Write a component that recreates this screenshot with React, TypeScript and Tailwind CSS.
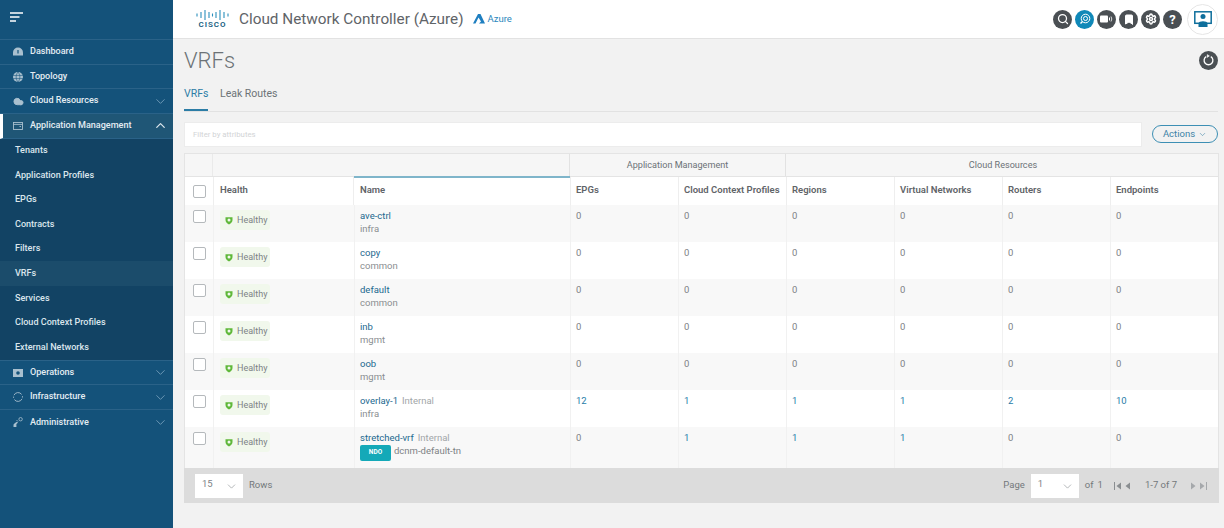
import React from "react";
import { ChevronDown, ChevronUp, Search, Settings, Cloud, Bookmark } from "lucide-react";

const cols = "grid grid-cols-[28px_141px_216px_108px_108px_108px_108px_108px_110px]";

function NavRow({ icon, label, chevron, active, noBorder }: { icon: React.ReactNode; label: string; chevron?: "up" | "down"; active?: boolean; noBorder?: boolean }) {
  return (
    <div className={`h-[24.7px] flex items-center relative ${noBorder ? "" : "border-b border-[#2a6288]"} ${active ? "bg-[#1f5676] border-l-[3px] border-l-white pl-[10px]" : "pl-[13px]"}`}>
      <span className="w-[17px] flex justify-start text-[#a9c0cf]">{icon}</span>
      <span className="text-[9.05px] font-medium text-[#e4edf3]">{label}</span>
      {chevron === "down" && <ChevronDown className="absolute right-[5px] w-[15px] h-[15px] text-[#6f9ab6]" strokeWidth={1.5} />}
      {chevron === "up" && <ChevronUp className="absolute right-[5px] w-[15px] h-[15px] text-[#dbe6ed]" strokeWidth={2} />}
    </div>
  );
}

function Sub({ label, active }: { label: string; active?: boolean }) {
  return (
    <div className={`h-[24.55px] flex items-center pl-[15px] text-[9.05px] font-medium text-[#dbe6ed] ${active ? "bg-[#1b4c6b]" : ""}`}>{label}</div>
  );
}

function HeadIcon({ children, bg = "bg-[#4a4f53]" }: { children: React.ReactNode; bg?: string }) {
  return <div className={`w-[19px] h-[19px] rounded-full flex items-center justify-center text-white ${bg}`}>{children}</div>;
}

function Shield() {
  return (
    <svg width="8" height="9" viewBox="0 0 8 9">
      <path d="M0.5 1.2 L7.5 1.2 L7.5 4 C7.5 6.2 5.6 7.8 4 8.5 C2.4 7.8 0.5 6.2 0.5 4 Z" fill="#5fb83a" />
      <circle cx="4" cy="3.9" r="1.5" fill="#f2f8ee" />
    </svg>
  );
}

const DashIcon = () => (
  <svg width="10" height="9" viewBox="0 0 10 9"><path d="M0 8.5 V5.5 A5 5 0 0 1 10 5.5 V8.5 Z" fill="#a9c0cf" /><path d="M5 6.5 L5 3" stroke="#14527a" strokeWidth="1.2" /></svg>
);
const GlobeIcon = () => (
  <svg width="10" height="10" viewBox="0 0 10 10"><circle cx="5" cy="5" r="5" fill="#a9c0cf" /><path d="M0 3.4 H10 M0 6.6 H10 M5 0 C2.5 3 2.5 7 5 10 M5 0 C7.5 3 7.5 7 5 10" stroke="#14527a" strokeWidth="0.6" fill="none" /></svg>
);
const AppIcon = () => (
  <svg width="10" height="8" viewBox="0 0 10 8"><rect x="0.5" y="0.5" width="9" height="7" fill="none" stroke="#a9c0cf" strokeWidth="0.9" /><path d="M0.5 2.4 H9.5 M6.5 4.5 H8" stroke="#a9c0cf" strokeWidth="0.9" /></svg>
);
const OpsIcon = () => (
  <svg width="10" height="8" viewBox="0 0 10 8"><rect width="10" height="8" fill="#a9c0cf" /><circle cx="5" cy="4" r="1.8" fill="#14527a" /></svg>
);
const InfraIcon = () => (
  <svg width="10" height="10" viewBox="0 0 10 10" fill="none" stroke="#a9c0cf" strokeWidth="0.9"><path d="M1 3.2 A4.4 4.4 0 0 1 8.6 2.4" /><path d="M9 6.8 A4.4 4.4 0 0 1 1.4 7.6" /><path d="M0.6 6 A4.5 4.5 0 0 1 0.6 4.6" /><path d="M9.4 4 A4.5 4.5 0 0 1 9.4 5.6" /></svg>
);
const AdminIcon = () => (
  <svg width="10" height="10" viewBox="0 0 10 10"><circle cx="7.6" cy="2.2" r="1.7" fill="none" stroke="#a9c0cf" strokeWidth="0.8" /><path d="M0.5 10 V7.5 L2 6 L4 4.8 L5 5.8 L3.4 7 V10 Z" fill="#a9c0cf" /><path d="M3.5 3 L5 4.5" stroke="#a9c0cf" strokeWidth="0.8" /></svg>
);

type Row = {
  name: string;
  internal?: boolean;
  sub: string;
  ndo?: boolean;
  v: (string | number)[];
};

const rows: Row[] = [
  { name: "ave-ctrl", sub: "infra", v: [0, 0, 0, 0, 0, 0] },
  { name: "copy", sub: "common", v: [0, 0, 0, 0, 0, 0] },
  { name: "default", sub: "common", v: [0, 0, 0, 0, 0, 0] },
  { name: "inb", sub: "mgmt", v: [0, 0, 0, 0, 0, 0] },
  { name: "oob", sub: "mgmt", v: [0, 0, 0, 0, 0, 0] },
  { name: "overlay-1", internal: true, sub: "infra", v: [12, 1, 1, 1, 2, 10] },
  { name: "stretched-vrf", internal: true, sub: "dcnm-default-tn", ndo: true, v: [0, 1, 1, 1, 0, 0] },
];

function Check() {
  return <div className="w-[13px] h-[13px] border border-[#b5b9bc] rounded-[2px] bg-white" />;
}

function TableRow({ r, i }: { r: Row; i: number }) {
  const last = i === rows.length - 1;
  return (
    <div className={`${cols} ${last ? "h-[41px]" : "h-[37px]"} ${i % 2 === 0 ? "bg-[#f8f8f8]" : "bg-white"} text-[9.5px]`}>
      <div className="pl-[8px] pt-[5px]"><Check /></div>
      <div className="pl-[6px] pt-[5px] border-l border-[#f1f1f1]">
        <div className="inline-flex w-[50px] h-[20px] items-center gap-[4px] pl-[5px] rounded-[3px] bg-[#f1f8ec] text-[9px] text-[#7d8285]">
          <Shield />
          <span className="pt-[1px]">Healthy</span>
        </div>
      </div>
      <div className="pl-[5px] pt-[5px] leading-[12.5px] border-l border-[#f1f1f1]">
        <div className="h-[12.5px]">
          <span className="text-[#22688f]">{r.name}</span>
          {r.internal && <span className="text-[#a2a6a9] ml-[4px]">Internal</span>}
        </div>
        {r.ndo ? (
          <div className="flex items-start gap-[3px]">
            <span className="w-[31px] h-[16px] rounded-[2px] bg-[#14a9b8] text-white text-[6.5px] font-bold flex items-center justify-center">NDO</span>
            <span className="text-[#7d8285]">{r.sub}</span>
          </div>
        ) : (
          <div className="text-[#8a8e91]">{r.sub}</div>
        )}
      </div>
      {r.v.map((n, k) => {
        const link = n !== 0;
        return (
          <div key={k} className={`pl-[5px] pt-[5px] leading-[12px] border-l border-[#f1f1f1] ${link ? "text-[#1f7ba8]" : "text-[#7d8285]"}`}>{n}</div>
        );
      })}
    </div>
  );
}

function SelectBox({ v }: { v: string }) {
  return (
    <div className="w-[48px] h-[24px] bg-white relative flex items-center pl-[7px] text-[9.5px] text-[#7d8285]">
      <span className="-mt-[2px]">{v}</span>
      <ChevronDown className="absolute right-[5px] top-[6px] w-[13px] h-[13px] text-[#8d9195]" strokeWidth={1.2} />
    </div>
  );
}

export default function App() {
  return (
    <div className="w-[1224px] h-[528px] flex overflow-hidden bg-[#f2f2f2] [font-family:Roboto,'Liberation_Sans',sans-serif]">
      <aside className="w-[173px] h-full shrink-0 bg-[#14527a] flex flex-col">
        <div className="h-[40px] flex items-center pl-[10px] border-b border-[#2a6288]">
          <svg width="13" height="12" viewBox="0 0 13 12" className="-mt-[4px]">
            <path d="M0 1 H13 M0 5 H9.5 M0 9 H6" stroke="#ffffff" strokeWidth="1.4" />
          </svg>
        </div>
        <NavRow icon={<DashIcon />} label="Dashboard" />
        <NavRow icon={<GlobeIcon />} label="Topology" />
        <NavRow icon={<Cloud className="w-[11px] h-[11px]" fill="#a9c0cf" />} label="Cloud Resources" chevron="down" />
        <NavRow icon={<AppIcon />} label="Application Management" chevron="up" active />
        <div className="bg-[#124364] border-b border-[#2a6288]">
          <Sub label="Tenants" />
          <Sub label="Application Profiles" />
          <Sub label="EPGs" />
          <Sub label="Contracts" />
          <Sub label="Filters" />
          <Sub label="VRFs" active />
          <Sub label="Services" />
          <Sub label="Cloud Context Profiles" />
          <Sub label="External Networks" />
        </div>
        <NavRow icon={<OpsIcon />} label="Operations" chevron="down" />
        <NavRow icon={<InfraIcon />} label="Infrastructure" chevron="down" />
        <NavRow icon={<AdminIcon />} label="Administrative" chevron="down" noBorder />
      </aside>

      <main className="flex-1 min-w-0 flex flex-col">
        <header className="h-[39px] bg-white border-b border-[#e2e2e2] flex items-center pl-[23px] pr-[6px] shrink-0">
          <div className="flex flex-col items-center w-[33px] mt-[1px]">
            <svg width="33" height="10" viewBox="0 0 33 10">
              {[1, 5, 9, 13, 16.5, 20, 24, 28, 32].map((x, k) => {
                const h = [3, 6, 10, 6, 3, 6, 10, 6, 3][k];
                return <line key={k} x1={x} x2={x} y1={5 - h / 2} y2={5 + h / 2} stroke="#2b8fbc" strokeWidth="1.1" />;
              })}
            </svg>
            <span className="text-[8px] leading-[10px] font-semibold tracking-[1px] text-[#17607f]">CISCO</span>
          </div>
          <span className="ml-[10px] text-[15.3px] text-[#5f6468]">Cloud Network Controller (Azure)</span>
          <svg width="12" height="10" viewBox="0 0 12 10" className="ml-[10px]">
            <path d="M5 0 L7.5 0 L12 9.5 L6 9.5 L8 7.5 L5.5 3.5 L2.5 9.5 L0 9.5 Z" fill="#1f7fc0" />
          </svg>
          <span className="ml-[2px] text-[9.5px] text-[#2a86bc]">Azure</span>
          <div className="ml-auto flex items-center gap-[3px]">
            <HeadIcon><Search className="w-[12px] h-[12px]" strokeWidth={2.5} /></HeadIcon>
            <HeadIcon bg="bg-[#0f88b8]">
              <svg width="12" height="12" viewBox="0 0 12 12" fill="none" stroke="white" strokeWidth="1"><circle cx="6.5" cy="5.5" r="4.3" /><circle cx="6.5" cy="5.5" r="2" /><path d="M3.5 8.5 L1.5 10.5" strokeWidth="1.4" /></svg>
            </HeadIcon>
            <HeadIcon>
              <svg width="13" height="10" viewBox="0 0 13 10" fill="white"><rect x="0" y="1.5" width="8" height="7" rx="1" /><path d="M9 4 L10 3 V7 L9 6 Z" /><path d="M11 2.5 Q12.6 5 11 7.5" fill="none" stroke="white" strokeWidth="0.8" /></svg>
            </HeadIcon>
            <HeadIcon><Bookmark className="w-[12px] h-[13px]" fill="white" /></HeadIcon>
            <HeadIcon><Settings className="w-[12px] h-[12px]" strokeWidth={3} /></HeadIcon>
            <HeadIcon><span className="text-[13px] font-bold leading-none">?</span></HeadIcon>
            <div className="ml-[2px] w-[31px] h-[31px] rounded-full border border-[#e6e6e6] flex items-center justify-center">
              <svg width="18" height="17" viewBox="0 0 18 17">
                <rect x="0.8" y="0.8" width="16.4" height="11.5" fill="none" stroke="#0f6f9c" strokeWidth="1.5" />
                <circle cx="9" cy="5.5" r="2.5" fill="#0f6f9c" />
                <path d="M4.5 16 V12.5 C4.5 9.5 13.5 9.5 13.5 12.5 V16 Z" fill="#0f6f9c" />
              </svg>
            </div>
          </div>
        </header>

        <div className="flex-1 px-[11px] pr-[5px]">
          <div className="h-[41px] flex items-center justify-between pr-[1px]">
            <h1 className="text-[22px] font-light text-[#6c7276] mt-[2px]">VRFs</h1>
            <div className="w-[19px] h-[19px] mt-[1px] rounded-full bg-[#4a4f53] flex items-center justify-center">
              <svg width="11" height="12" viewBox="0 0 11 12" fill="none" stroke="white" strokeWidth="1.3"><path d="M3.2 2.6 A4.4 4.4 0 1 0 7.8 2.6" /><path d="M4.2 0.6 L6.4 1.9 L4.2 3.4 Z" fill="white" strokeWidth="0.5" /></svg>
            </div>
          </div>
          <div className="h-[32px] flex items-start gap-[12px] border-b border-[#e2e2e2] text-[10.5px] mr-[1px]">
            <div className="h-[31px] w-[24px] border-b-[2px] border-[#2c7da6] text-[#2c7da6] pt-[6px]">VRFs</div>
            <div className="text-[#6c7276] pt-[6px]">Leak Routes</div>
          </div>
          <div className="h-[41px] flex items-start pt-[10px]">
            <div className="w-[958px] h-[25px] bg-white border border-[#ececec] flex items-center pl-[8px] text-[7.8px] text-[#d2d4d6]">Filter by attributes</div>
            <div className="ml-[10px] mt-[3px] w-[66px] h-[18px] rounded-full border border-[#3d8fb4] flex items-center justify-center gap-[3px] text-[9.5px] text-[#3d82a6]">
              Actions <ChevronDown className="w-[9px] h-[9px]" strokeWidth={1.5} />
            </div>
          </div>

          <div className="w-[1035px] border border-[#e4e4e4] border-b-0 text-[9.5px]">
            <div className={`${cols} h-[23px] bg-[#f6f6f6] text-[#6c7276] border-b border-[#e4e4e4] text-[9.1px]`}>
              <div className="border-r border-[#eaeaea]" />
              <div />
              <div className="border-r border-[#e2e2e2]" />
              <div className="col-span-2 flex items-center justify-center border-r border-[#e2e2e2] pt-[1px]">Application Management</div>
              <div className="col-span-4 flex items-center justify-center pt-[1px]">Cloud Resources</div>
            </div>
            <div className={`${cols} h-[28px] bg-white font-semibold text-[#5f6468] items-stretch`}>
              <div className="flex items-center pl-[8px]"><Check /></div>
              <div className="flex items-center pl-[6px] pb-[2px] border-l border-r border-[#eeeeee]">Health</div>
              <div className="flex items-center pl-[6px] pb-[2px] border-t-2 border-[#7fb5ca] -mt-[1px]">Name</div>
              {["EPGs", "Cloud Context Profiles", "Regions", "Virtual Networks", "Routers", "Endpoints"].map((h) => (
                <div key={h} className="flex items-center pl-[5px] pb-[2px] border-l border-[#eeeeee] whitespace-nowrap">{h}</div>
              ))}
            </div>
            {rows.map((r, i) => <TableRow key={r.name} r={r} i={i} />)}
            <div className="h-[35px] -mx-px bg-[#dcdcdc] flex items-center px-[11px] text-[#73787b]">
              <SelectBox v="15" />
              <span className="ml-[6px]">Rows</span>
              <span className="ml-auto">Page</span>
              <span className="ml-[6px]"><SelectBox v="1" /></span>
              <span className="ml-[6px]">of</span>
              <span className="ml-[4px]">1</span>
              <svg width="20" height="8" viewBox="0 0 20 8" className="ml-[11px]" fill="#8a8e91">
                <path d="M1 0 V8 H0 V0 Z M7 0.5 V7.5 L2.5 4 Z M16 0.5 V7.5 L11.5 4 Z" />
              </svg>
              <span className="ml-[11px]">1-7 of 7</span>
              <svg width="20" height="8" viewBox="0 0 20 8" className="ml-[11px]" fill="#a5a8ab">
                <path d="M3 0.5 V7.5 L7.5 4 Z M12 0.5 V7.5 L16.5 4 Z M18 0 H19 V8 H18 Z" />
              </svg>
            </div>
          </div>
        </div>
      </main>
    </div>
  );
}
